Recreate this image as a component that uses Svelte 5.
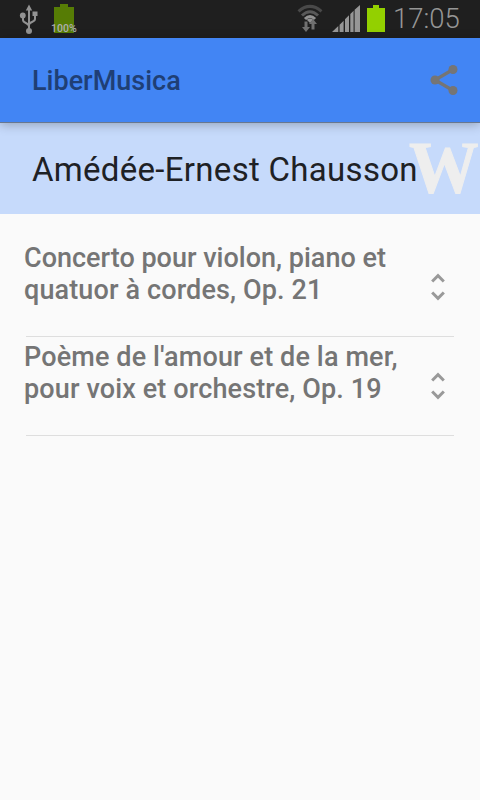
<script lang="ts">
  type Line = { text: string; tracking: number };
  type Work = { id: number; lines: Line[] };

  const composer = 'Amédée-Ernest Chausson';
  const works: Work[] = [
    {
      id: 1,
      lines: [
        { text: 'Concerto pour violon, piano et', tracking: 0 },
        { text: 'quatuor à cordes, Op. 21', tracking: 0.13 }
      ]
    },
    {
      id: 2,
      lines: [
        { text: "Poème de l'amour et de la mer,", tracking: 0.13 },
        { text: 'pour voix et orchestre, Op. 19', tracking: 0.13 }
      ]
    }
  ];
</script>

<div class="screen">
  <div class="status-bar">
    <svg class="usb" width="20" height="32" viewBox="0 0 20 32" aria-hidden="true">
      <g fill="none" stroke="#929292" stroke-width="2">
        <path d="M10 27V6M10 23.5C10 19.5 4 20.5 4 17v-4M10 22c0-3.5 6-2.5 6-6v-3" />
      </g>
      <path d="M10 1.5L6.8 7.5h6.4zM13.5 8.5h5v4.5h-5z" fill="#929292" />
      <circle cx="3.8" cy="12.4" r="2.9" fill="#929292" />
      <circle cx="10" cy="28" r="3" fill="#929292" />
    </svg>
    <div class="charge">
      <svg width="20" height="29" viewBox="0 0 20 29" aria-hidden="true">
        <path d="M6 0h8v3h6v26H0V3h6z" fill="#567c05" />
      </svg>
      <span>100%</span>
    </div>
    <div class="indicators">
      <svg width="26" height="30" viewBox="0 0 26 30" aria-hidden="true">
        <g fill="none" stroke-width="3">
          <path d="M1.5 7.3Q13 -2.5 24.5 7.3" stroke="#494949" />
          <path d="M5 11.5Q13 4 21 11.5" stroke="#595959" />
          <path d="M8 15Q13 9.8 18 15" stroke="#929292" />
        </g>
        <path d="M9.8 15.8Q13 13 16.2 15.8L13 19z" fill="#929292" />
        <path d="M7.5 17.5h3V23h2.5l-4 5-4-5h2.5zM14.5 25.5V20H12l4-5 4 5h-2.5v5.5z" fill="#707070" />
      </svg>
      <svg class="signal" width="28" height="28" viewBox="0 0 28 28" aria-hidden="true">
        <path d="M0 27L6.3 21v6zM7.6 19.7l4-4V27h-4zM13 14.3l4-4V27h-4zM18.3 9l3.3-3.3V27h-3.3zM22.6 4.8L28 0V27h-5.4z" fill="#969696" />
      </svg>
      <svg class="battery" width="18" height="27" viewBox="0 0 18 27" aria-hidden="true">
        <path d="M6 0h6v3h6v24H0V3h6z" fill="#93d000" />
      </svg>
      <span class="clock">17:05</span>
    </div>
  </div>

  <header class="app-bar">
    <span class="app-name">LiberMusica</span>
    <button class="share" aria-label="Share">
      <svg width="30" height="32" viewBox="0 0 30 32">
        <path d="M24 5.5L6 16l18 10.5" fill="none" stroke="#757575" stroke-width="3.2" />
        <circle cx="24" cy="5.5" r="4.5" fill="#757575" />
        <circle cx="6" cy="16" r="4.5" fill="#757575" />
        <circle cx="24" cy="26.5" r="4.5" fill="#757575" />
      </svg>
    </button>
  </header>

  <section class="composer">
    <h1>{composer}</h1>
    <svg class="wiki" width="72" height="56" viewBox="0 0 72 56" role="img" aria-label="Wikipedia">
      <text x="1" y="52" textLength="69.5" lengthAdjust="spacingAndGlyphs">W</text>
    </svg>
  </section>

  <ul class="works">
    {#each works as work (work.id)}
      <li>
        <p>
          {#each work.lines as line}
            <span style="letter-spacing: {line.tracking}px">{line.text}</span>
          {/each}
        </p>
        <svg class="unfold" width="36" height="36" viewBox="0 0 24 24" aria-hidden="true">
          <path d="M12 5.83L15.17 9l1.41-1.41L12 3 7.41 7.59 8.83 9zM12 18.17L8.83 15l-1.41 1.41L12 21l4.59-4.59L15.17 15z" />
        </svg>
      </li>
    {/each}
  </ul>
</div>

<style>
  :global(body) {
    margin: 0;
    background: #fafafa;
  }

  .screen {
    width: 480px;
    height: 800px;
    overflow: hidden;
    background: #fafafa;
    font-family: Roboto, 'Liberation Sans', sans-serif;
  }

  .status-bar {
    display: flex;
    height: 38px;
    box-sizing: border-box;
    padding: 4px 20px 0 18.5px;
    background: #1f1f1f;
  }

  .usb {
    margin-top: -1px;
  }

  .charge {
    position: relative;
    width: 20px;
    margin-left: 15.5px;
  }

  .charge span {
    position: absolute;
    left: -3px;
    top: 19px;
    font-size: 10.5px;
    font-weight: 500;
    line-height: 12px;
    color: #b0b0b0;
  }

  .indicators {
    display: flex;
    align-items: flex-start;
    margin-left: auto;
  }

  .signal {
    margin: 1px 7px 0 9px;
  }

  .battery {
    margin: 1px 8px 0 0;
  }

  .clock {
    width: 67px;
    font-size: 27.5px;
    line-height: 30px;
    color: #969696;
    font-weight: 300;
  }

  .app-bar {
    position: relative;
    z-index: 1;
    display: flex;
    align-items: center;
    justify-content: space-between;
    height: 85px;
    box-sizing: border-box;
    padding: 0 21px 0 32px;
    background: #4285f4;
    border-bottom: 1px solid #68778f;
    box-shadow: 0 2px 10px rgba(0, 0, 0, 0.25);
  }

  .app-name {
    padding-top: 1px;
    font-size: 27px;
    font-weight: 500;
    color: #1f3f75;
  }

  .share {
    display: flex;
    padding: 0;
    border: 0;
    background: none;
  }

  .composer {
    display: flex;
    align-items: center;
    height: 91px;
    padding-left: 32px;
    background: #c6dafb;
  }

  h1 {
    flex: 1;
    min-width: 0;
    margin: 0;
    padding-top: 2px;
    font-size: 33px;
    font-weight: 400;
    letter-spacing: 0.3px;
    line-height: 40px;
    white-space: nowrap;
    color: #1e2125;
  }

  .wiki {
    flex: none;
    overflow: visible;
  }

  .wiki text {
    font-family: 'Liberation Serif', serif;
    font-size: 75px;
    font-weight: 700;
    fill: #eee;
    stroke: #eee;
    stroke-width: 1;
  }

  .works {
    margin: 0;
    padding: 24px 26px 0;
    list-style: none;
  }

  li {
    display: flex;
    justify-content: space-between;
    height: 98px;
    border-bottom: 1px solid #dedede;
  }

  p {
    margin: 4px 0 0 -2px;
    font-size: 27px;
    font-weight: 500;
    line-height: 32px;
    color: #757575;
  }

  p span {
    display: block;
    white-space: nowrap;
  }

  .unfold {
    margin: 31px -2px 0 0;
    fill: #999;
  }
</style>
